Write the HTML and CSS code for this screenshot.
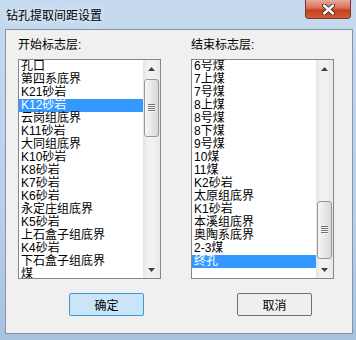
FILE: index.html
```html
<!DOCTYPE html>
<html lang="zh-CN">
<head>
  <meta charset="UTF-8">
  <title>钻孔提取间距设置</title>
  <link rel="stylesheet" href="styles.css">
</head>
<body>

  <div class="window">
    <div class="titlebar">
      <span class="title">钻孔提取间距设置</span>
      <div class="close">
        <svg width="13" height="11" viewBox="0 0 13 11">
          <path d="M2 1.5 L11 9.5 M11 1.5 L2 9.5" stroke="#3b2320" stroke-width="4.2" stroke-linecap="round"/>
          <path d="M2 1.5 L11 9.5 M11 1.5 L2 9.5" stroke="#ffffff" stroke-width="2.4" stroke-linecap="round"/>
        </svg>
      </div>
    </div>

    <div class="client">
      <div class="columns">
        <div class="col">
          <div class="label">开始标志层:</div>
          <div class="listbox">
            <ul class="items">
              <li>孔口</li>
              <li>第四系底界</li>
              <li>K21砂岩</li>
              <li class="sel">K12砂岩</li>
              <li>云岗组底界</li>
              <li>K11砂岩</li>
              <li>大同组底界</li>
              <li>K10砂岩</li>
              <li>K8砂岩</li>
              <li>K7砂岩</li>
              <li>K6砂岩</li>
              <li>永定庄组底界</li>
              <li>K5砂岩</li>
              <li>上石盒子组底界</li>
              <li>K4砂岩</li>
              <li>下石盒子组底界</li>
              <li>煤</li>
            </ul>
            <div class="scrollbar">
              <div class="arrow"><svg width="7" height="4" viewBox="0 0 7 4"><path d="M0 4 L3.5 0 L7 4 Z" fill="#404040"/></svg></div>
              <div class="track">
                <div class="thumb" style="margin-top: 2px"><span class="grip"></span></div>
              </div>
              <div class="arrow"><svg width="7" height="4" viewBox="0 0 7 4"><path d="M0 0 L7 0 L3.5 4 Z" fill="#404040"/></svg></div>
            </div>
          </div>
        </div>

        <div class="col">
          <div class="label">结束标志层:</div>
          <div class="listbox">
            <ul class="items">
              <li>6号煤</li>
              <li>7上煤</li>
              <li>7号煤</li>
              <li>8上煤</li>
              <li>8号煤</li>
              <li>8下煤</li>
              <li>9号煤</li>
              <li>10煤</li>
              <li>11煤</li>
              <li>K2砂岩</li>
              <li>太原组底界</li>
              <li>K1砂岩</li>
              <li>本溪组底界</li>
              <li>奥陶系底界</li>
              <li>2-3煤</li>
              <li class="sel">终孔</li>
            </ul>
            <div class="scrollbar">
              <div class="arrow"><svg width="7" height="4" viewBox="0 0 7 4"><path d="M0 4 L3.5 0 L7 4 Z" fill="#404040"/></svg></div>
              <div class="track">
                <div class="thumb" style="margin-top: 124px"><span class="grip"></span></div>
              </div>
              <div class="arrow"><svg width="7" height="4" viewBox="0 0 7 4"><path d="M0 0 L7 0 L3.5 4 Z" fill="#404040"/></svg></div>
            </div>
          </div>
        </div>
      </div>

      <div class="buttons">
        <button class="btn default">确定</button>
        <button class="btn">取消</button>
      </div>
    </div>
  </div>

</body>
</html>
```

FILE: styles.css
```css
body {
  margin: 0;
  font-family: "Liberation Sans", "Noto Sans CJK SC", sans-serif;
  font-size: 12px;
  color: #000000;
  background: #ffffff;
}

.window {
  width: 356px;
  height: 340px;
  box-sizing: border-box;
  padding: 0 3px 6px 5px;
  display: flex;
  flex-direction: column;
  background: linear-gradient(to bottom, #c6daef, #b9d0e9 60%, #a8c2de);
}

.titlebar {
  height: 29px;
  display: flex;
  justify-content: space-between;
  align-items: flex-start;
}

.title {
  margin: 6px 0 0 1px;
  line-height: 17px;
  font-family: "Noto Sans CJK SC", sans-serif;
  text-shadow: 0 0 6px rgba(255, 255, 255, 0.9);
}

.close {
  width: 46px;
  height: 19px;
  box-sizing: border-box;
  margin-right: 2px;
  border: 1px solid #6b3a30;
  border-top: none;
  border-radius: 0 0 4px 4px;
  background: linear-gradient(to bottom, #e9a99b, #d7705a 45%, #c5401f 55%, #d25a38);
  display: flex;
  align-items: center;
  justify-content: center;
}

.client {
  flex: 1;
  border: 1px solid #8396ac;
  background: #f0f0f0;
  padding-top: 9px;
}

.columns {
  display: grid;
  grid-template-columns: 143px 143px;
  column-gap: 30px;
  padding-left: 12px;
}

.label {
  line-height: 13px;
  margin-bottom: 7px;
}

.listbox {
  height: 220px;
  box-sizing: border-box;
  border: 1px solid #828790;
  background: #ffffff;
  display: flex;
}

.items {
  flex: 1;
  margin: 0;
  padding: 0;
  list-style: none;
  overflow: hidden;
}

.items li {
  height: 13px;
  line-height: 13px;
  padding-left: 2px;
  white-space: nowrap;
}

.items li.sel {
  background: #3399ff;
  color: #ffffff;
}

.scrollbar {
  width: 17px;
  display: flex;
  flex-direction: column;
  background: linear-gradient(to right, #e6e6e6, #f2f2f2 30%, #f0f0f0 70%, #e9e9e9);
}

.arrow {
  height: 17px;
  display: flex;
  align-items: center;
  justify-content: center;
}

.track {
  flex: 1;
}

.thumb {
  height: 58px;
  margin: 0 1px;
  box-sizing: border-box;
  border: 1px solid #979797;
  border-radius: 3px;
  background: linear-gradient(to right, #f6f6f6, #e8e8e8 50%, #d9d9d9);
  display: flex;
  align-items: center;
  justify-content: center;
}

.grip {
  width: 7px;
  height: 8px;
  background: repeating-linear-gradient(to bottom, #707070 0 1px, #fafafa 1px 2px);
}

.buttons {
  display: flex;
  gap: 93px;
  padding-left: 63px;
  margin-top: 14px;
}

.btn {
  width: 75px;
  height: 23px;
  padding: 0;
  font-family: "Noto Sans CJK SC", sans-serif;
  font-size: 12px;
  color: #000000;
  border: 1px solid #707070;
  border-radius: 2px;
  background: linear-gradient(to bottom, #f2f2f2, #ebebeb 50%, #dddddd 50%, #cfcfcf);
  background: #efefef;
}

.btn.default {
  border-color: #3c9ad6;
  background: #cae5f8;
}
```
